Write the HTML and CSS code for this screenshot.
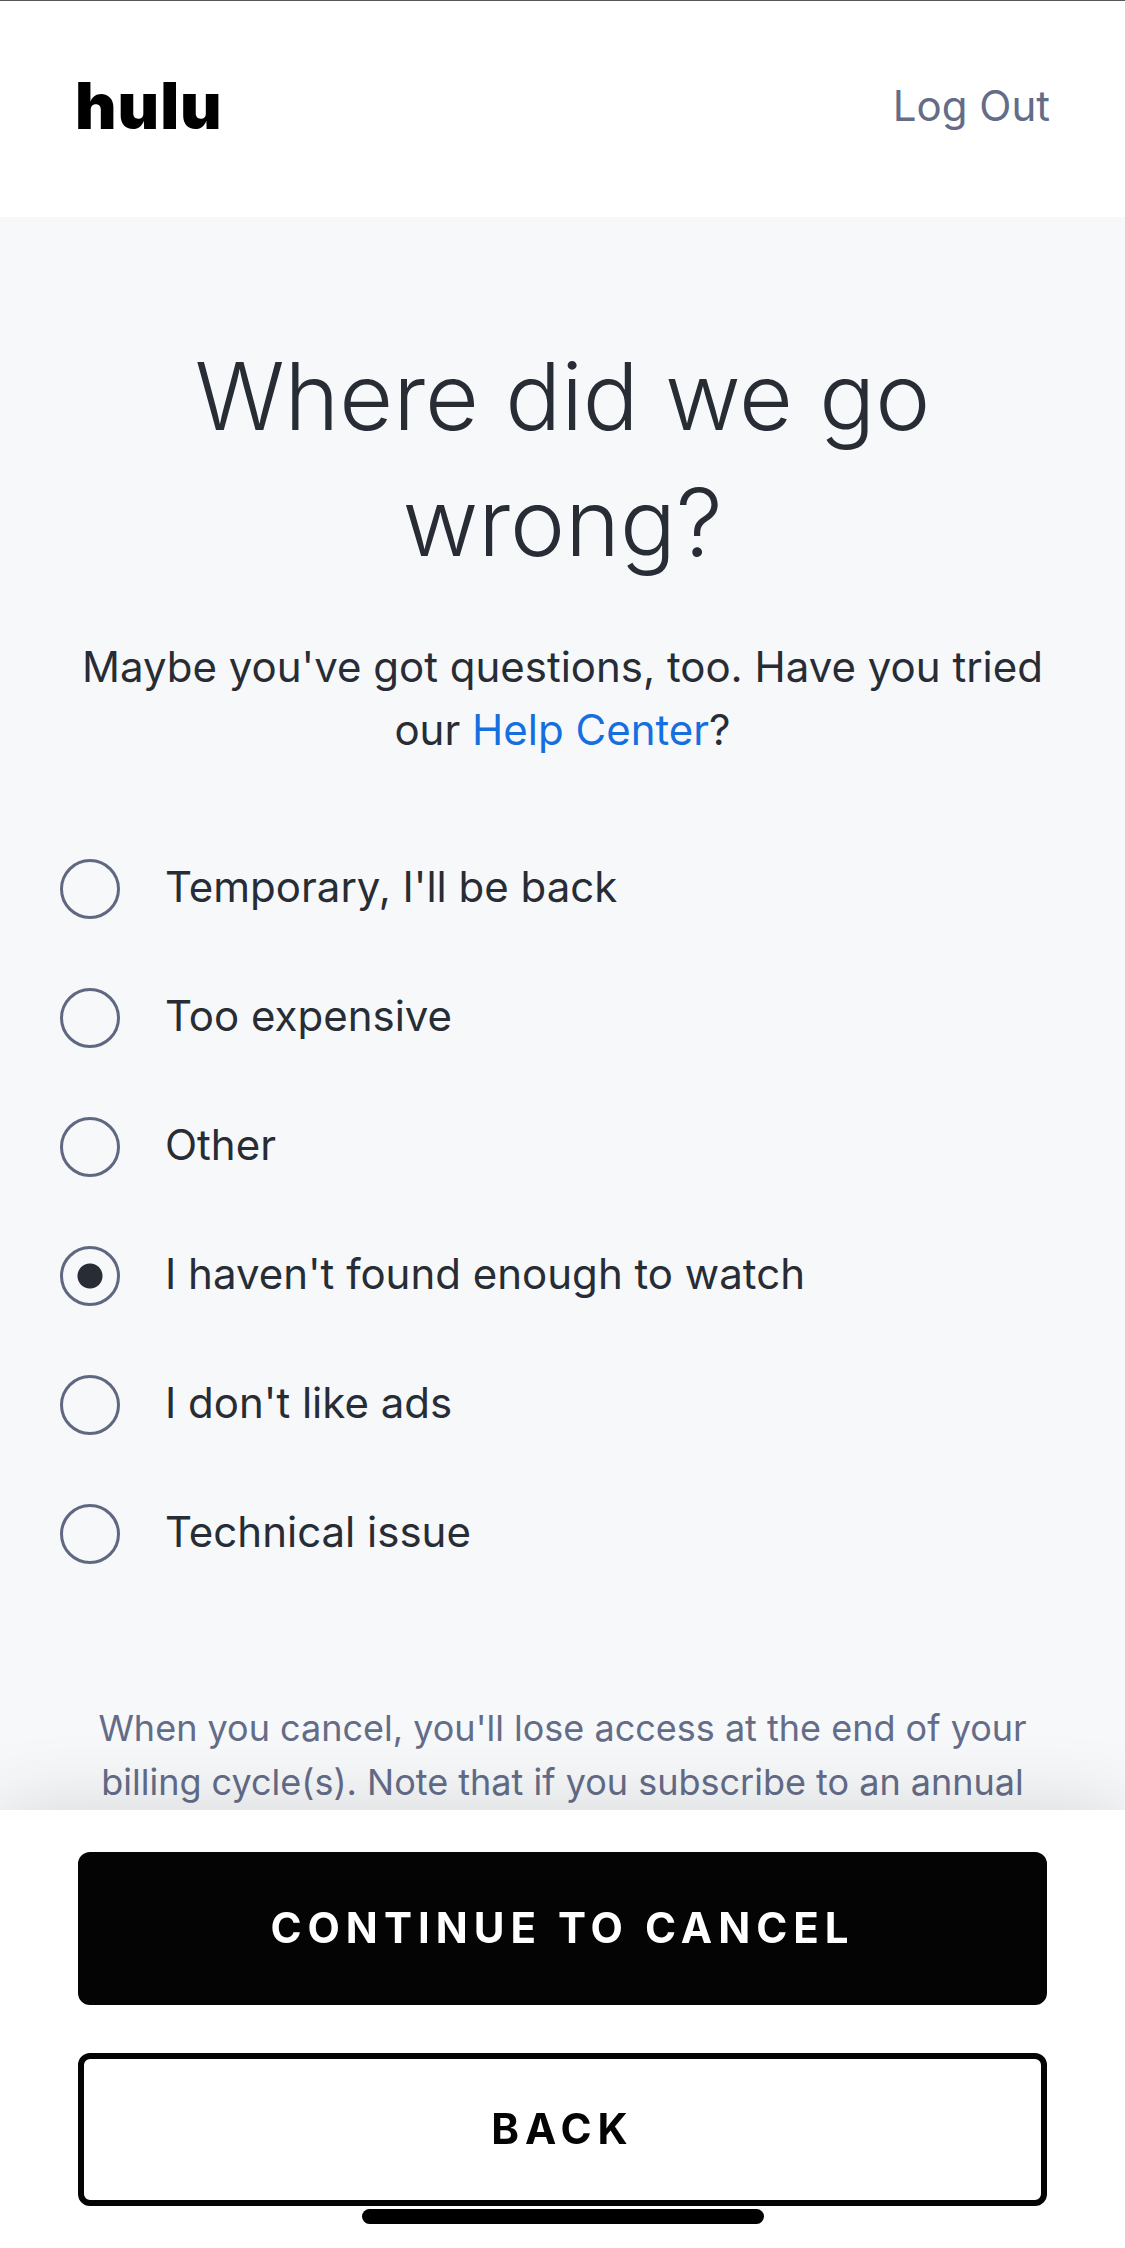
FILE: index.html
```
<!DOCTYPE html>
<html lang="en">
<head>
  <meta charset="UTF-8" />
  <meta name="viewport" content="width=device-width, initial-scale=1.0"/>
  <title>Hulu</title>
  <link rel="stylesheet" href="styles.css">
</head>
<body>

  <header class="header">
    <a class="logo" href="#">hulu</a>
    <a class="logout" href="#">Log Out</a>
  </header>

  <main class="content">
    <h1>Where did we go wrong?</h1>
    <p class="intro">Maybe you've got questions, too. Have you tried our <a href="#">Help Center</a>?</p>

    <form id="reasonForm" class="reasons">
      <label class="reason"><input type="radio" name="reason" value="temporary"> Temporary, I'll be back</label>
      <label class="reason"><input type="radio" name="reason" value="expensive"> Too expensive</label>
      <label class="reason"><input type="radio" name="reason" value="other"> Other</label>
      <label class="reason"><input type="radio" name="reason" value="content" checked> I haven't found enough to watch</label>
      <label class="reason"><input type="radio" name="reason" value="ads"> I don't like ads</label>
      <label class="reason"><input type="radio" name="reason" value="technical"> Technical issue</label>
    </form>

    <p class="note">When you cancel, you'll lose access at the end of your billing cycle(s). Note that if you subscribe to an annual</p>
  </main>

  <footer class="actions">
    <button type="submit" form="reasonForm" class="btn btn-primary">Continue to cancel</button>
    <button type="button" class="btn">Back</button>
    <div class="home-bar"></div>
  </footer>

</body>
</html>
```

FILE: styles.css
```
* {
  box-sizing: border-box;
}

body {
  margin: 0;
  background-color: #f6f8fa;
  color: #272c35;
  font-family: Inter, "Liberation Sans", sans-serif;
  font-size: 42px;
  line-height: 63px;
}

a {
  color: #166fe0;
  text-decoration: none;
}

.header {
  display: flex;
  align-items: center;
  justify-content: space-between;
  height: 217px;
  padding: 0 75px 7px;
  background-color: #fff;
  border-top: 1px solid #555559;
}

.logo {
  color: #000;
  font-size: 64px;
  font-weight: 900;
  letter-spacing: 1px;
}

.logout {
  color: #646c88;
}

.content {
  padding: 116px 60px 440px;
}

h1 {
  margin: 0 0 50px;
  font-size: 93px;
  font-weight: 300;
  line-height: 126px;
  text-align: center;
}

.intro {
  margin: 0 0 98px;
  text-align: center;
}

.reasons {
  display: flex;
  flex-direction: column;
  gap: 69px;
}

.reason {
  display: flex;
  align-items: flex-start;
  gap: 45px;
  line-height: 56px;
  cursor: pointer;
}

.reason input {
  appearance: none;
  flex: none;
  width: 60px;
  height: 60px;
  margin: 0;
  border: 3px solid #5f6781;
  border-radius: 50%;
}

.reason input:checked {
  background: radial-gradient(circle, #272c35 12px, transparent 13px);
}

.note {
  margin: 137px 0 0;
  color: #646c88;
  font-size: 36px;
  line-height: 54px;
  text-align: center;
}

.actions {
  position: fixed;
  right: 0;
  bottom: 0;
  left: 0;
  display: flex;
  flex-direction: column;
  gap: 48px;
  padding: 42px 78px;
  background-color: #fff;
  box-shadow: 0 0 75px rgba(0,0,0,0.14);
}

.btn {
  height: 153px;
  padding: 0 0 3px;
  border: 6px solid #040404;
  border-radius: 12px;
  background-color: #fff;
  color: #040404;
  font-family: inherit;
  font-size: 42px;
  font-weight: 700;
  letter-spacing: 6px;
  text-transform: uppercase;
  cursor: pointer;
}

.btn-primary {
  background-color: #040404;
  color: #fff;
}

/* phone gesture bar, sits over the page */
.home-bar {
  position: absolute;
  bottom: 24px;
  left: 50%;
  width: 402px;
  height: 15px;
  margin-left: -201px;
  border-radius: 8px;
  background-color: #000;
}
```
